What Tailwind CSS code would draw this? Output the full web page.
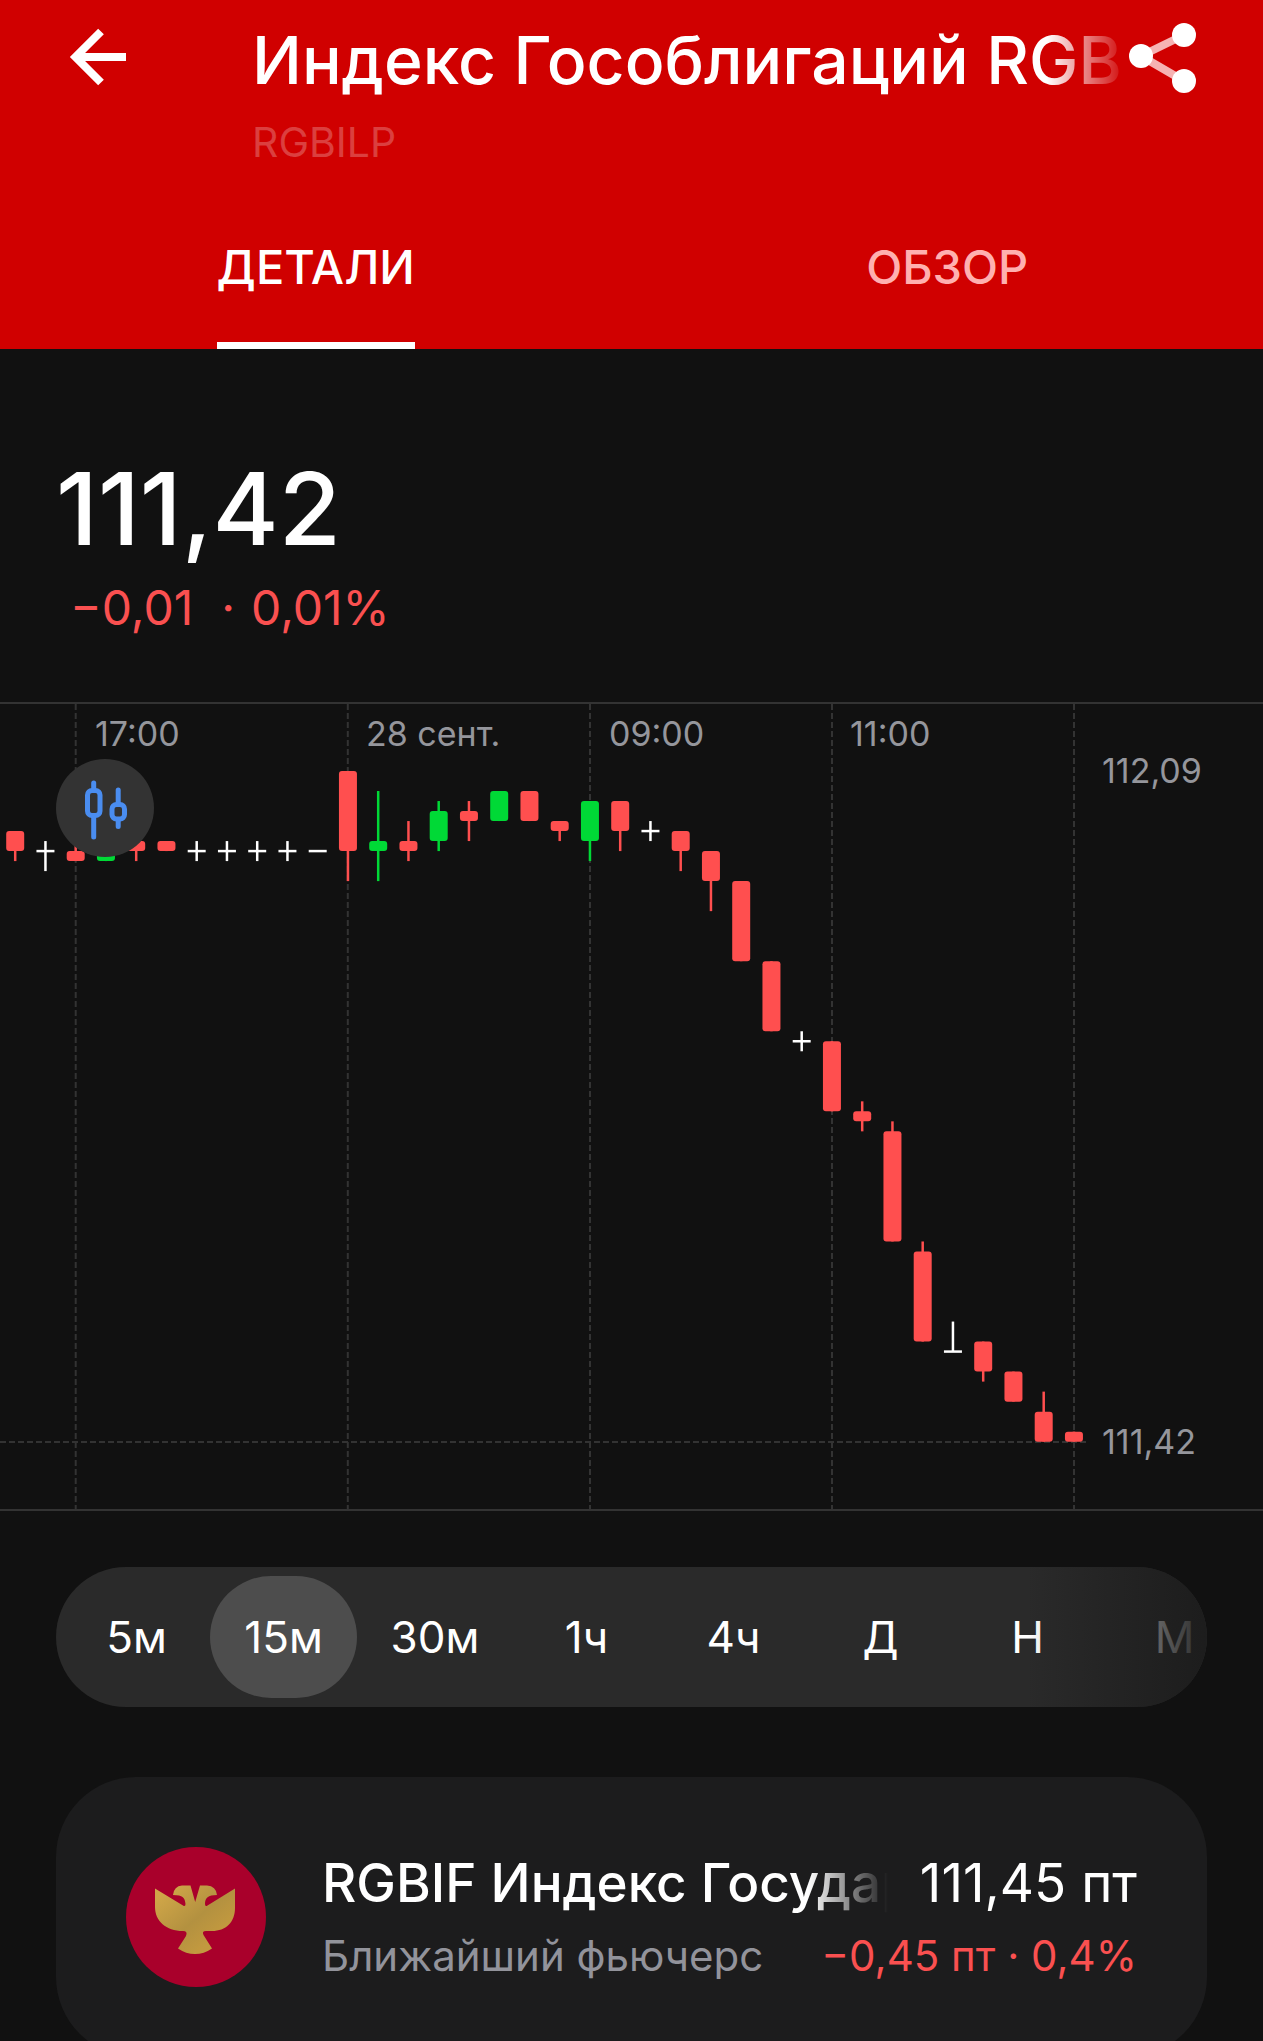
<!DOCTYPE html>
<html lang="ru">
<head>
<meta charset="utf-8">
<meta name="viewport" content="width=device-width, initial-scale=1">
<title>Индекс Гособлигаций RGBI</title>
<script src="https://cdn.jsdelivr.net/npm/@tailwindcss/browser@4"></script>
</head>
<body class="h-screen overflow-hidden bg-[#111111] font-['Inter',sans-serif] text-white">

<header class="bg-[#d00000]">
  <div class="flex h-[185px] items-start pr-14 pl-16">
    <button type="button" aria-label="Назад" class="mt-5 w-[188px] shrink-0">
      <svg class="h-[74px] w-[74px]" viewBox="0 0 74 74" fill="none" stroke="#fff" stroke-width="8"><path d="M62 37H12M37 11.500L11.500 37L37 62.500"/></svg>
    </button>
    <div class="min-w-0 flex-1 pt-5">
      <h1 class="overflow-hidden text-[66px] leading-[80px] font-medium whitespace-nowrap [mask-image:linear-gradient(to_right,#000_calc(100%-80px),transparent)]">Индекс Гособлигаций RGB</h1>
      <p class="mt-4 text-[41px] leading-[52px] text-white/25">RGBILP</p>
    </div>
    <button type="button" aria-label="Поделиться" class="mt-5 shrink-0">
      <svg class="h-[74px] w-[80px]" viewBox="0 0 80 74"><path d="M57 15L14 36L57 61" fill="none" stroke="#f6b3b3" stroke-width="8"/><circle cx="57" cy="15" r="12" fill="#fff"/><circle cx="14" cy="36" r="12" fill="#fff"/><circle cx="57" cy="61" r="12" fill="#fff"/></svg>
    </button>
  </div>
  <nav class="grid h-[164px] grid-cols-2 text-[47px] font-medium">
    <a href="#details" class="flex justify-center"><span class="flex items-center border-t-[7px] border-b-[7px] border-t-transparent border-b-white">ДЕТАЛИ</span></a>
    <a href="#overview" class="flex items-center justify-center text-[#ffb0b0]">ОБЗОР</a>
  </nav>
</header>

<main>
  <section class="px-14 pt-[99px] pb-16">
    <p class="text-[101px] leading-[120px] font-medium">111,42</p>
    <p class="mt-[10px] flex items-center pl-[14px] text-[48px] leading-[60px] text-[#fa5050]"><span>−0,01</span><span class="mr-4 ml-7">·</span><span>0,01%</span></p>
  </section>

  <section class="relative">
    <svg id="chart" class="block w-full" viewBox="0 0 1263 809" role="img" aria-label="Свечной график">
      <g fill="none" stroke="#333" stroke-width="2">
        <path d="M0 1H1263M0 808H1263"/>
        <path stroke-dasharray="6 3" d="M75.700 2V808M347.800 2V808M590 2V808M832 2V808M1074 2V808M0 740H1086"/>
      </g>
      <g id="candles"></g>
      <g fill="#95969c" font-size="34">
        <text x="95" y="44">17:00</text>
        <text x="366" y="44">28 сент.</text>
        <text x="609" y="44">09:00</text>
        <text x="850" y="44">11:00</text>
        <text x="1102" y="81">112,09</text>
        <text x="1102" y="752">111,42</text>
      </g>
    </svg>
    <button type="button" aria-label="Тип графика" class="absolute top-[57px] left-14 h-[98px] w-[98px] rounded-full bg-[#333333]">
      <svg class="h-full w-full" viewBox="0 0 98 98" fill="none" stroke="#4a8df0" stroke-width="5" stroke-linecap="round"><rect x="31.500" y="31.500" width="12.500" height="25" rx="4.500"/><rect x="56" y="45.500" width="12.500" height="14.500" rx="4.500"/><path d="M37.700 24V31M37.700 58V78M62.200 31V45M62.200 61V67.500"/></svg>
    </button>
  </section>

  <div class="relative mx-14 mt-14 flex h-[140px] items-center overflow-hidden rounded-full bg-[#2a2a2a] pl-[7px] text-[44px]">
    <button type="button" class="h-[122px] w-[147px] shrink-0">5м</button>
    <button type="button" aria-pressed="true" class="h-[122px] w-[147px] shrink-0 rounded-[61px] bg-[#4d4d4d]">15м</button>
    <button type="button" class="h-[122px] w-[156px] shrink-0">30м</button>
    <button type="button" class="h-[122px] w-[147px] shrink-0">1ч</button>
    <button type="button" class="h-[122px] w-[147px] shrink-0">4ч</button>
    <button type="button" class="h-[122px] w-[147px] shrink-0">Д</button>
    <button type="button" class="h-[122px] w-[147px] shrink-0">Н</button>
    <button type="button" class="h-[122px] w-[147px] shrink-0">М</button>
    <div class="pointer-events-none absolute inset-y-0 right-0 w-[180px] bg-linear-to-r from-[#1c1c1c]/0 to-[#1c1c1c]/95"></div>
  </div>

  <a href="#future" class="mx-14 mt-[70px] flex items-center rounded-[80px] bg-[#1c1c1d] p-[70px]">
    <svg class="h-[140px] w-[140px] shrink-0" viewBox="0 0 140 140">
      <defs><linearGradient id="gold" x1="0" y1="0" x2="1" y2="1"><stop offset="0.100" stop-color="#d0a648"/><stop offset="0.500" stop-color="#b39140"/><stop offset="0.750" stop-color="#c2993f"/></linearGradient></defs>
      <circle cx="70" cy="70" r="70" fill="#a9002b"/>
      <path fill="url(#gold)" d="M29 41.500L57 58.500Q59.500 60 59.500 57C59 51 57 48 47 48Q48 39 56 38.500H64.500L69.200 55L74 38.500H81Q90 39 91 48C82 48 79 51 79 57Q79 60 81.500 58.500L109 41.500V61C109 75 100 84 86 84H80Q75.500 84 77.500 88L86 101.500Q78 107 69 107Q60 107 52 101.500L60 89Q62 84 57 84C40 84 29 74 29 60Z"/>
    </svg>
    <div class="ml-14 min-w-0 flex-1">
      <div class="flex items-center gap-8 text-[53px] leading-[70px]">
        <h2 class="min-w-0 flex-1 overflow-hidden font-medium whitespace-nowrap [mask-image:linear-gradient(to_right,#000_calc(100%-80px),transparent)]">RGBIF Индекс Государ</h2>
        <span class="shrink-0">111,45 пт</span>
      </div>
      <div class="mt-2 flex items-center justify-between text-[42px] leading-[60px] whitespace-nowrap">
        <span class="text-[#92939b]">Ближайший фьючерс</span>
        <span class="text-[#fa5050]">−0,45 пт · 0,4%</span>
      </div>
    </div>
  </a>
</main>

<script>
  // [high, body top, body bottom, low, colour], in ticks of 0,01 below 112,09
  const R = '#ff4f4f', G = '#00d936', W = '#fff';
  const data = [
    [6,6,8,9,R],[7,8,8,10,W],[7,8,9,9,R],[8,8,9,9,G],[7,7,8,9,R],[7,7,8,8,R],
    [7,8,8,9,W],[7,8,8,9,W],[7,8,8,9,W],[7,8,8,9,W],[8,8,8,8,W],[0,0,8,11,R],
    [2,7,8,11,G],[5,7,8,9,R],[3,4,7,8,G],[3,4,5,7,R],[2,2,5,5,G],[2,2,5,5,R],
    [5,5,6,7,R],[3,3,7,9,G],[3,3,6,8,R],[5,6,6,7,W],[6,6,8,10,R],[8,8,11,14,R],
    [11,11,19,19,R],[19,19,26,26,R],[26,27,27,28,W],[27,27,34,34,R],[33,34,35,36,R],
    [35,36,47,47,R],[47,48,57,57,R],[55,58,58,58,W],[57,57,60,61,R],[60,60,63,63,R],
    [62,64,67,67,R],[66,66,67,67,R]
  ];
  const y = t => 69 + t * 10.01;
  document.getElementById('candles').innerHTML = data.map(([h, a, b, l, c], i) => {
    const x = 15.2 + i * 30.25;
    const wick = l > h ? `<path d="M${x} ${y(h)}V${y(l)}" stroke="${c}" stroke-width="2.500"/>` : '';
    const body = a === b
      ? `<path d="M${x - 9} ${y(a)}h18" stroke="${c}" stroke-width="2.500"/>`
      : `<rect x="${x - 9}" y="${y(a)}" width="18" height="${y(b) - y(a)}" rx="3" fill="${c}"/>`;
    return wick + body;
  }).join('');
</script>
</body>
</html>
